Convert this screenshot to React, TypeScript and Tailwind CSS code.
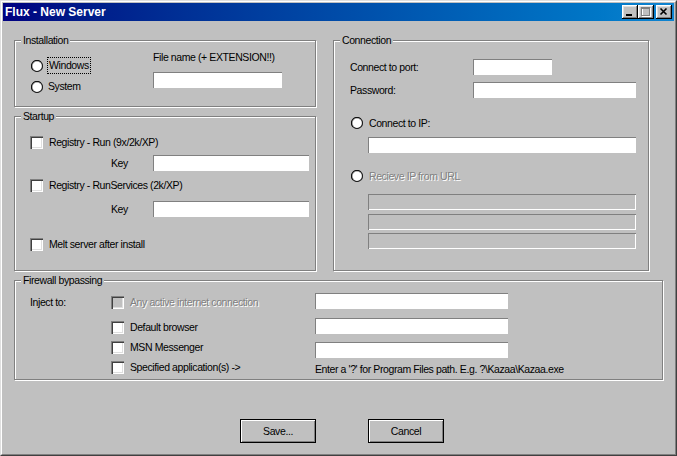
import React from "react"

const field = "bg-white shadow-[inset_1px_1px_0_#808080,inset_-1px_-1px_0_#ffffff]"
const fieldOff = "bg-[#c0c0c0] shadow-[inset_1px_1px_0_#808080,inset_-1px_-1px_0_#ffffff]"
const grayText = "text-[#808080] [text-shadow:1px_1px_0_#ffffff]"

function Group({ label, className, children }: { label: string; className: string; children?: React.ReactNode }) {
  return (
    <div className={`relative border border-[#808080] shadow-[inset_1px_1px_0_#ffffff,1px_1px_0_#ffffff] ${className}`}>
      <span className="absolute left-[6px] -top-[7px] px-[2px] bg-[#c0c0c0] leading-[13px]">{label}</span>
      {children}
    </div>
  )
}

function RadioDot() {
  return (
    <svg width="12" height="12" viewBox="0 0 12 12" className="shrink-0">
      <circle cx="6" cy="6" r="5.5" fill="#ffffff" />
      <path d="M2.11 9.89 A5.5 5.5 0 0 1 9.89 2.11" fill="none" stroke="#000000" strokeWidth="1.2" />
      <path d="M9.89 2.11 A5.5 5.5 0 0 1 2.11 9.89" fill="none" stroke="#202020" strokeWidth="1.2" />
      <path d="M2.6 9.4 A4.8 4.8 0 0 1 9.4 2.6" fill="none" stroke="#808080" strokeWidth="0.6" />
    </svg>
  )
}

function Check({ label, disabled, className = "" }: { label: string; disabled?: boolean; className?: string }) {
  return (
    <div className={`flex items-center h-[16px] gap-[6px] ${className}`}>
      <div
        className={`w-[13px] h-[13px] shrink-0 shadow-[inset_1px_1px_0_#808080,inset_2px_2px_0_#404040,inset_-1px_-1px_0_#ffffff,inset_-2px_-2px_0_#dfdfdf] ${
          disabled ? "bg-[#c0c0c0]" : "bg-white"
        }`}
      />
      <span className={disabled ? grayText : ""}>{label}</span>
    </div>
  )
}

function Button({ label, className = "" }: { label: string; className?: string }) {
  return (
    <div
      className={`w-[76px] h-[24px] flex items-center justify-center border border-black shadow-[inset_1px_1px_0_#ffffff,inset_-1px_-1px_0_#808080] ${className}`}
    >
      {label}
    </div>
  )
}

const titleBtn =
  "w-[16px] h-[14px] bg-[#c0c0c0] shadow-[inset_-1px_-1px_0_#000000,inset_1px_1px_0_#ffffff,inset_-2px_-2px_0_#808080,inset_2px_2px_0_#dfdfdf]"

export default function App() {
  return (
    <div className="w-[677px] h-[456px] overflow-hidden font-['Liberation_Sans',Arial,sans-serif] text-[10.5px] tracking-[-0.4px] leading-[13px] text-black border border-t-[#dfdfdf] border-l-[#dfdfdf] border-r-[#404040] border-b-[#404040]">
      <div className="h-full bg-[#c0c0c0] p-px border border-t-white border-l-white border-r-[#808080] border-b-[#808080]">
        {/* title bar */}
        <div className="h-[18px] flex items-center pl-[2px] pr-[2px] bg-linear-to-r from-[#000080] to-[#1084d0]">
          <span className="text-white font-bold text-[12px] tracking-normal leading-[14px]">Flux - New Server</span>
          <div className="ml-auto flex items-center">
            <div className={titleBtn}>
              <svg width="16" height="14" viewBox="0 0 16 14">
                <rect x="4" y="9" width="6" height="2" fill="#000000" />
              </svg>
            </div>
            <div className={titleBtn}>
              <svg width="16" height="14" viewBox="0 0 16 14">
                <rect x="4.5" y="3.5" width="8" height="8" fill="none" stroke="#ffffff" />
                <rect x="3.5" y="2.5" width="8" height="8" fill="none" stroke="#808080" />
                <rect x="3" y="3" width="9" height="1" fill="#808080" />
              </svg>
            </div>
            <div className={`${titleBtn} ml-[2px]`}>
              <svg width="16" height="14" viewBox="0 0 16 14">
                <path d="M4.5 3.5 L10.5 9.5 M10.5 3.5 L4.5 9.5" stroke="#000000" strokeWidth="1.6" />
              </svg>
            </div>
          </div>
        </div>

        <div className="pl-[11px] pt-[19px]">
          <div className="flex gap-[17px]">
            {/* left column */}
            <div className="flex flex-col">
              <Group label="Installation" className="w-[302px] h-[67px]">
                <div className="flex">
                  <div className="w-[138px] pl-[16px] pt-[14px] flex flex-col">
                    <div className="flex items-center h-[21px] gap-[4px]">
                      <RadioDot />
                      <span className="border border-dotted border-black px-[1px] leading-[15px]">Windows</span>
                    </div>
                    <div className="flex items-center h-[21px] gap-[5px]">
                      <RadioDot />
                      <span>System</span>
                    </div>
                  </div>
                  <div className="pt-[10px]">
                    <div>File name (+ EXTENSION!!)</div>
                    <div className={`${field} mt-[8px] w-[129px] h-[16px]`} />
                  </div>
                </div>
              </Group>

              <Group label="Startup" className="w-[302px] h-[155px] mt-[9px]">
                <div className="flex flex-col pl-[15px] pt-[17px]">
                  <Check label="Registry - Run (9x/2k/XP)" />
                  <div className="flex items-center h-[16px] mt-[5px] pl-[81px]">
                    <span className="w-[42px]">Key</span>
                    <div className={`${field} w-[156px] h-[16px]`} />
                  </div>
                  <Check label="Registry - RunServices (2k/XP)" className="mt-[6px]" />
                  <div className="flex items-center h-[16px] mt-[8px] pl-[81px]">
                    <span className="w-[42px]">Key</span>
                    <div className={`${field} w-[156px] h-[16px]`} />
                  </div>
                  <Check label="Melt server after install" className="mt-[19px]" />
                </div>
              </Group>
            </div>

            {/* right column */}
            <Group label="Connection" className="w-[316px] h-[231px]">
              <div className="flex flex-col pl-[16px] pt-[18px]">
                <div className="flex items-center h-[16px]">
                  <span className="w-[123px]">Connect to port:</span>
                  <div className={`${field} w-[79px] h-[16px]`} />
                </div>
                <div className="flex items-center h-[16px] mt-[7px]">
                  <span className="w-[123px]">Password:</span>
                  <div className={`${field} w-[163px] h-[16px]`} />
                </div>
                <div className="flex items-center h-[16px] mt-[17px] pl-[1px] gap-[6px]">
                  <RadioDot />
                  <span>Connect to IP:</span>
                </div>
                <div className={`${field} mt-[6px] ml-[18px] w-[268px] h-[16px]`} />
                <div className="flex items-center h-[16px] mt-[15px] pl-[1px] gap-[6px]">
                  <RadioDot />
                  <span className={grayText}>Recieve IP from URL</span>
                </div>
                <div className={`${fieldOff} mt-[10px] ml-[18px] w-[268px] h-[16px]`} />
                <div className={`${fieldOff} mt-[4px] ml-[18px] w-[268px] h-[16px]`} />
                <div className={`${fieldOff} mt-[3px] ml-[18px] w-[268px] h-[16px]`} />
              </div>
            </Group>
          </div>

          <Group label="Firewall bypassing" className="w-[649px] h-[100px] mt-[9px]">
            <div className="flex">
              <div className="w-[96px] pl-[15px] pt-[13px]">
                <div className="flex items-center h-[16px]">Inject to:</div>
              </div>
              <div className="w-[204px] pt-[13px] flex flex-col">
                <Check label="Any active internet connection" disabled />
                <Check label="Default browser" className="mt-[9px]" />
                <Check label="MSN Messenger" className="mt-[4px]" />
                <Check label="Specified application(s) ->" className="mt-[4px]" />
              </div>
              <div className="pt-[12px] flex flex-col">
                <div className={`${field} w-[193px] h-[16px]`} />
                <div className={`${field} mt-[9px] w-[193px] h-[16px]`} />
                <div className={`${field} mt-[8px] w-[193px] h-[16px]`} />
                <div className="mt-[5px] whitespace-nowrap">{"Enter a '?' for Program Files path. E.g. ?\\Kazaa\\Kazaa.exe"}</div>
              </div>
            </div>
          </Group>

          <div className="flex mt-[39px]">
            <Button label="Save..." className="ml-[226px]" />
            <Button label="Cancel" className="ml-[52px]" />
          </div>
        </div>
      </div>
    </div>
  )
}
